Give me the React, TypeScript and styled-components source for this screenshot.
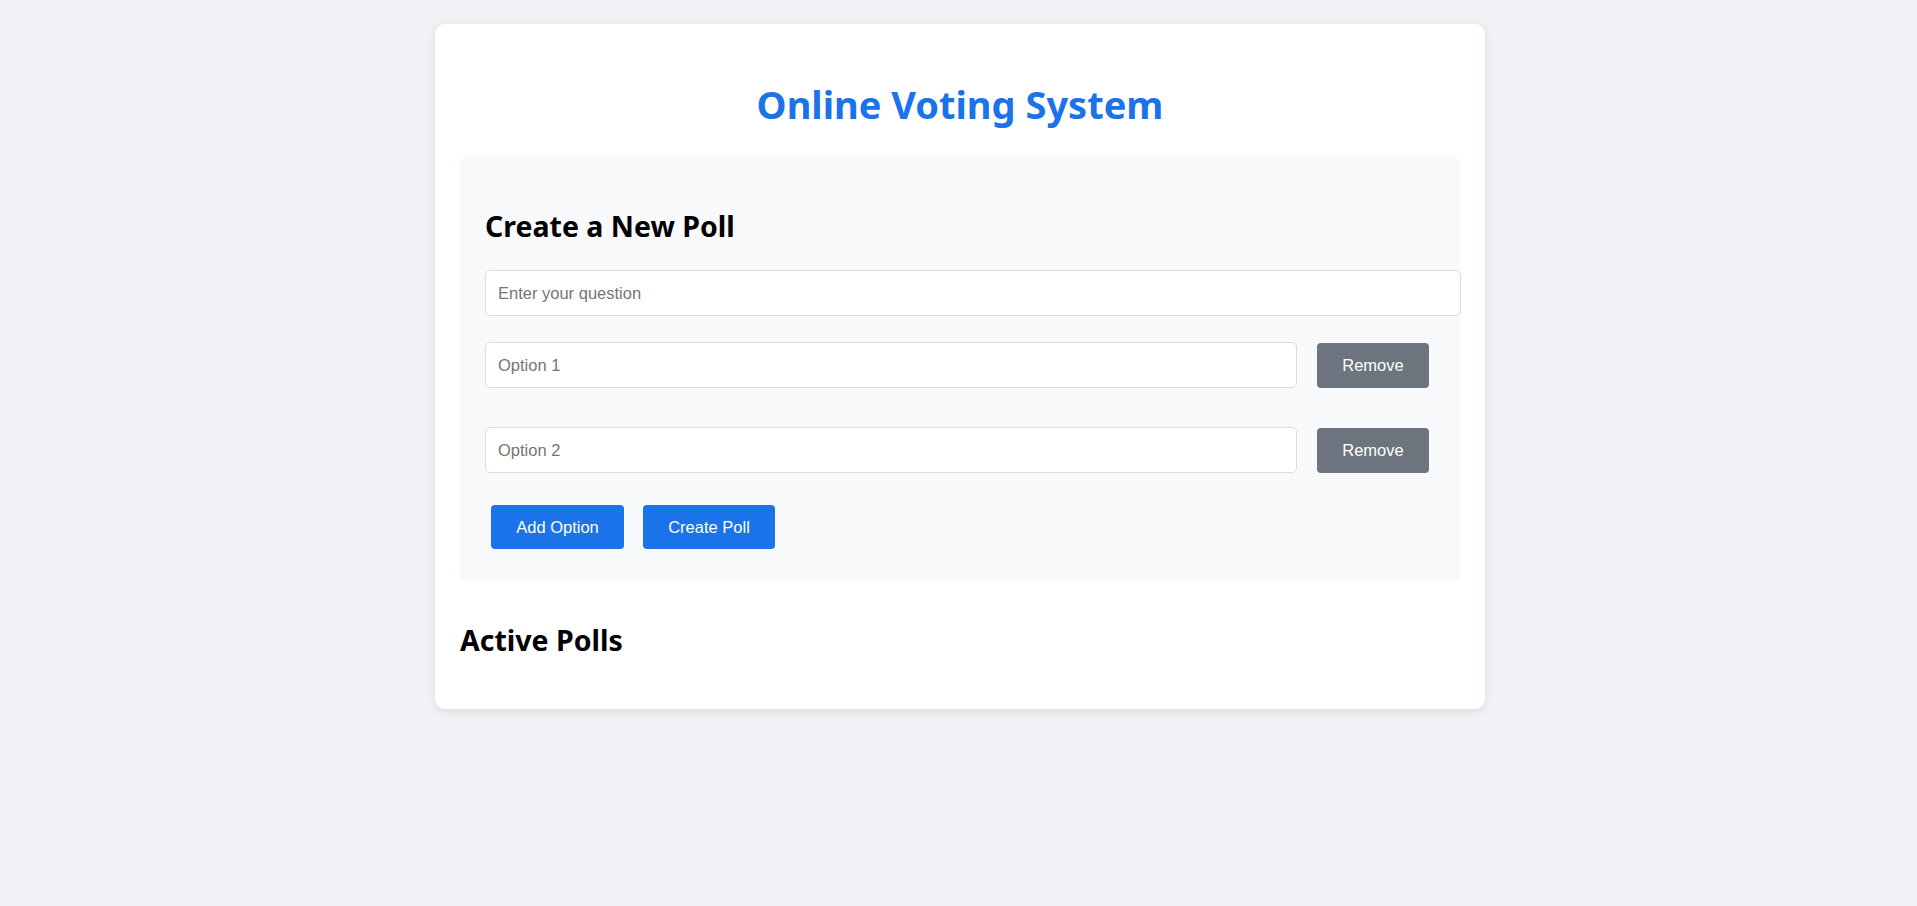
import React, { useState } from "react";
import styled, { createGlobalStyle } from "styled-components";

const GlobalStyle = createGlobalStyle`
  html, body {
    margin: 0;
    padding: 0;
    background: #f0f2f5;
  }
  body {
    font-family: "Noto Sans", "Open Sans", sans-serif;
    color: #000;
  }
  * { box-sizing: border-box; }
`;

const Page = styled.div`
  padding: 24px 0 24px 3px;
`;

const Card = styled.main`
  width: 1050px;
  margin: 0 auto;
  padding: 25px;
  background: #ffffff;
  border-radius: 10px;
  box-shadow: 0 2px 10px rgba(0, 0, 0, 0.1);
`;

const Title = styled.h1`
  margin: 35px 0 32px;
  font-size: 38px;
  line-height: 40px;
  font-weight: 700;
  color: #1a73e8;
  text-align: center;
`;

const Panel = styled.section`
  background: #f8f9fa;
  border-radius: 8px;
  padding: 25px;
`;

const SectionTitle = styled.h2<{ $top: number; $bottom: number }>`
  margin: ${(p) => p.$top}px 0 ${(p) => p.$bottom}px;
  font-size: 28.5px;
  line-height: 30px;
  font-weight: 700;
  color: #000;
`;

const TextInput = styled.input<{ $full?: boolean }>`
  display: block;
  box-sizing: content-box;
  width: ${(p) => (p.$full ? "100%" : "auto")};
  flex: ${(p) => (p.$full ? "none" : "1 1 auto")};
  min-width: 0;
  height: 20px;
  padding: 12px;
  border: 1px solid #dddddd;
  border-radius: 5px;
  background: #ffffff;
  font-family: "Liberation Sans", Arial, sans-serif;
  font-size: 16.5px;
  line-height: 20px;
  color: #222;
  outline: none;
  &::placeholder {
    color: #757575;
  }
`;

const QuestionWrap = styled.div`
  margin-bottom: 26px;
`;

const OptionList = styled.div`
  display: flex;
  flex-direction: column;
  gap: 39px;
`;

const OptionRow = styled.div`
  display: flex;
  align-items: center;
  gap: 20px;
  padding-right: 6px;
`;

const Button = styled.button<{ $variant: "primary" | "secondary" }>`
  flex: none;
  height: ${(p) => (p.$variant === "secondary" ? "45px" : "44px")};
  padding: 0;
  border: none;
  border-radius: 4px;
  background: ${(p) => (p.$variant === "secondary" ? "#6c757d" : "#1a73e8")};
  color: #ffffff;
  font-family: "Liberation Sans", Arial, sans-serif;
  font-size: 16.5px;
  line-height: 20px;
  cursor: pointer;
`;

const RemoveButton = styled(Button)`
  width: 112px;
`;

const ButtonRow = styled.div`
  display: flex;
  gap: 19px;
  margin-top: 32px;
  padding-left: 6px;
  padding-bottom: 7px;
`;

const AddButton = styled(Button)`
  width: 133px;
`;

const CreateButton = styled(Button)`
  width: 132px;
`;

export default function App() {
  const [question, setQuestion] = useState("");
  const [options, setOptions] = useState<string[]>(["", ""]);

  return (
    <>
      <GlobalStyle />
      <Page>
        <Card>
          <Title>Online Voting System</Title>
          <Panel>
            <SectionTitle $top={30} $bottom={29}>
              Create a New Poll
            </SectionTitle>
            <QuestionWrap>
              <TextInput
                $full
                placeholder="Enter your question"
                value={question}
                onChange={(e) => setQuestion(e.target.value)}
              />
            </QuestionWrap>
            <OptionList>
              {options.map((opt, i) => (
                <OptionRow key={i}>
                  <TextInput
                    placeholder={`Option ${i + 1}`}
                    value={opt}
                    onChange={(e) => {
                      const next = [...options];
                      next[i] = e.target.value;
                      setOptions(next);
                    }}
                  />
                  <RemoveButton
                    $variant="secondary"
                    onClick={() => setOptions(options.filter((_, j) => j !== i))}
                  >
                    Remove
                  </RemoveButton>
                </OptionRow>
              ))}
            </OptionList>
            <ButtonRow>
              <AddButton $variant="primary" onClick={() => setOptions([...options, ""])}>
                Add Option
              </AddButton>
              <CreateButton $variant="primary">Create Poll</CreateButton>
            </ButtonRow>
          </Panel>
          <SectionTitle $top={44} $bottom={29}>
            Active Polls
          </SectionTitle>
        </Card>
      </Page>
    </>
  );
}
